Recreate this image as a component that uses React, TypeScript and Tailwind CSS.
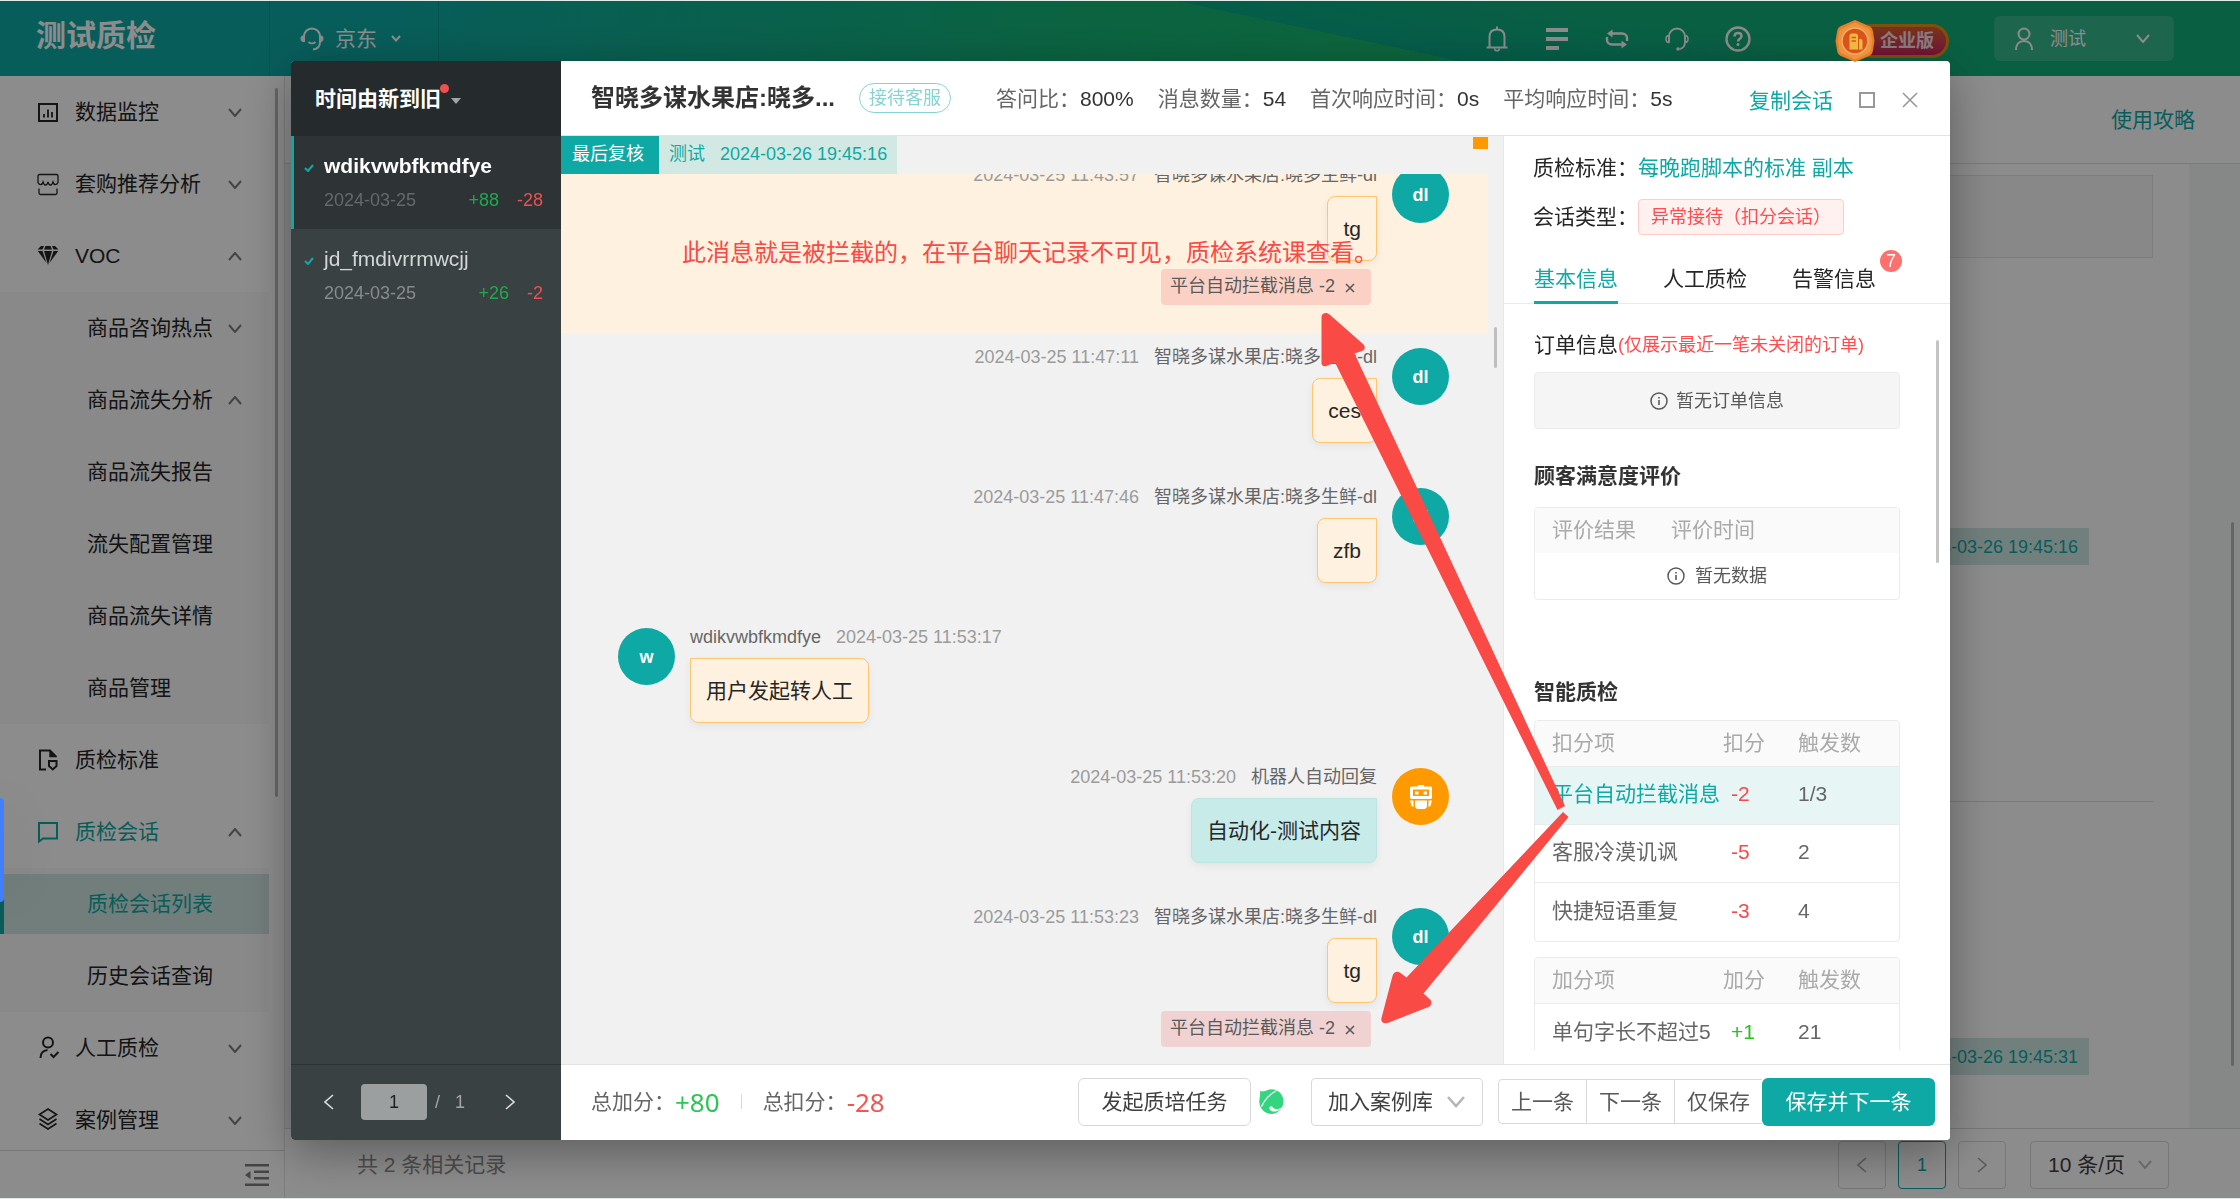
import React from 'react'

const DOWN = 'M1 1l6 7 6-7'
const UP = 'M1 8l6-7 6 7'

function Chevron({ d = DOWN, className = '' }: { d?: string; className?: string }) {
  return (
    <svg viewBox="0 0 14 9" className={`h-[9px] w-[14px] fill-none stroke-current stroke-2 ${className}`}>
      <path d={d} />
    </svg>
  )
}

function Arrow({ right = false, className = '' }: { right?: boolean; className?: string }) {
  return (
    <svg viewBox="0 0 10 16" className={`h-4 w-[10px] fill-none stroke-current ${className}`}>
      <path d={right ? 'M1 1l8 7-8 7' : 'M9 1L1 8l8 7'} strokeWidth="1.6" />
    </svg>
  )
}

function InfoIcon() {
  return (
    <svg viewBox="0 0 18 18" className="h-[18px] w-[18px] fill-none stroke-current">
      <circle cx="9" cy="9" r="8" strokeWidth="1.5" />
      <path d="M9 8v5M9 5v1.6" strokeWidth="1.6" />
    </svg>
  )
}

const icons: Record<string, React.ReactNode> = {
  chart: (
    <>
      <path d="M2 3h18v17H2z" strokeWidth="2" />
      <path d="M7 13v3.500M11 8.500v8M15 11v5.500" strokeWidth="1.800" />
    </>
  ),
  shop: (
    <>
      <path d="M2.500 1.500h17c1 0 1.500.5 1.500 1.500v6.500c-1.500 3-4 3-5-.5-1.200 4-4 4-5 0-1 4-3.800 4-5 0-1 3.500-3.500 3.500-5 .5V3c0-1 .5-1.500 1.500-1.500z" strokeWidth="1.300" />
      <path d="M2 15.500v4.500c0 1 .5 1.500 1.500 1.500h15c1 0 1.500-.5 1.500-1.500v-4.500" strokeWidth="1.300" />
    </>
  ),
  gem: (
    <g className="fill-current" stroke="none">
      <path d="M4 1h3L5.500 4.500H.5zM8.500 1h5l1.500 3.500H7zM15 1h3l3.500 3.500h-5zM.8 6H5.500l4 12zM7 6h8l-4 14zM16.500 6h4.700l-8.700 12z" />
    </g>
  ),
  standard: (
    <>
      <path d="M9 20.500H3V1.500h10l6 6" strokeWidth="2" />
      <path d="M12.500 1v7H20z" className="fill-current" strokeWidth="0.500" />
      <path d="M12 12h7.500v5l-3.700 3.500-3.800-3.500z" strokeWidth="2" />
    </>
  ),
  chat: <path d="M2 2h18v15.500H6L2 20.500z" strokeWidth="2" />,
  check: (
    <>
      <circle cx="11" cy="5.500" r="5" strokeWidth="2" />
      <path d="M3.500 21c0-5 2.500-7.500 7-8M13.500 17l3 3 5-5" strokeWidth="2" />
    </>
  ),
  layers: (
    <path d="M11 0l8.500 5.500L11 11 2.500 5.500zM2.500 10L11 15.500l8.500-5.500M2.500 14.500L11 20l8.500-5.500" strokeWidth="1.700" />
  ),
}

function MenuItem({ icon, label, arrow, active }: { icon: string; label: string; arrow?: string; active?: boolean }) {
  return (
    <a href="#" className={`flex h-[72px] items-center pl-[37px] pr-[27px] ${active ? 'text-[#0ea9a5]' : 'text-[#262626]'}`}>
      <svg viewBox="0 0 22 22" className="mr-4 h-[22px] w-[22px] overflow-visible fill-none stroke-current">{icons[icon]}</svg>
      <span>{label}</span>
      {arrow && <Chevron d={arrow} className="ml-auto text-[#7d7d7d]" />}
    </a>
  )
}

function SubItem({ label, arrow }: { label: string; arrow?: string }) {
  return (
    <a href="#" className="flex h-[72px] items-center pl-[87px] pr-[27px] text-[#262626]">
      <span>{label}</span>
      {arrow && <Chevron d={arrow} className="ml-auto text-[#7d7d7d]" />}
    </a>
  )
}

function Sidebar() {
  return (
    <aside className="relative flex w-[285px] shrink-0 flex-col border-r border-[#e4e4e4] bg-white">
      <nav className="min-h-0 flex-1 overflow-hidden pr-[15px]">
        <MenuItem icon="chart" label="数据监控" arrow={DOWN} />
        <MenuItem icon="shop" label="套购推荐分析" arrow={DOWN} />
        <MenuItem icon="gem" label="VOC" arrow={UP} />
        <div className="bg-[#fafafa]">
          <SubItem label="商品咨询热点" arrow={DOWN} />
          <SubItem label="商品流失分析" arrow={UP} />
          <SubItem label="商品流失报告" />
          <SubItem label="流失配置管理" />
          <SubItem label="商品流失详情" />
          <SubItem label="商品管理" />
        </div>
        <MenuItem icon="standard" label="质检标准" />
        <MenuItem icon="chat" label="质检会话" arrow={UP} active />
        <div className="bg-[#fafafa] pt-[6px]">
          <a href="#" className="mb-[6px] flex h-[60px] items-center border-l-4 border-[#0ea9a5] bg-[#cfe5e1] pl-[83px] text-[#0ea9a5]">
            质检会话列表
          </a>
          <SubItem label="历史会话查询" />
        </div>
        <MenuItem icon="check" label="人工质检" arrow={DOWN} />
        <MenuItem icon="layers" label="案例管理" arrow={DOWN} />
      </nav>
      <div className="absolute right-[6px] top-3 h-[709px] w-[3px] rounded bg-[#b9b9b9]" />
      <div className="flex h-12 shrink-0 items-center justify-end border-t border-[#d9d9d9] pr-[15px]">
        <button aria-label="收起菜单">
          <svg viewBox="0 0 24 22" className="h-[22px] w-6 fill-[#7d7d7d]">
            <path d="M0 0h24v2.500H0zM9 6.500h15V9H9zM9 13h15v2.500H9zM0 19.500h24V22H0zM0 11l5.500-4v8z" />
          </svg>
        </button>
      </div>
    </aside>
  )
}

function TopBar() {
  return (
    <header className="flex h-[75px] shrink-0 items-center bg-[linear-gradient(12deg,transparent_59%,#09a987_59%,#12ae78_74%),linear-gradient(100deg,#0ea9a5_0%,#0ea9a5_16%,#14b577_48%,#17b870_60%)] text-white">
      <h1 className="flex h-full w-[270px] items-center border-r border-black/10 pb-[6px] pl-9 text-[30px] font-bold">测试质检</h1>
      <button className="flex h-full w-[169px] items-center border-r border-black/10 pl-[30px]">
        <svg viewBox="0 0 24 24" className="h-6 w-6 fill-none stroke-current">
          <path d="M4 15V9.500C4 5 7.500 1.500 12 1.500S20 5 20 9.500V15c0 4-2 7-7 7.500" strokeWidth="2" />
          <path d="M4 9H2.500C1.500 9 1 10 1 11.500S1.500 14.500 2.500 14.500H4zM20 9h1.500c1 0 1.500 1 1.500 2.500s-.5 3-1.500 3H20z" className="fill-current" />
          <path d="M8.500 15c2 1.800 5 1.800 7 0" strokeWidth="2" />
        </svg>
        <span className="ml-[11px]">京东</span>
        <svg viewBox="0 0 10 7" className="ml-[14px] h-[7px] w-[10px] fill-none stroke-current stroke-2">
          <path d="M1 1l4 4.500L9 1" />
        </svg>
      </button>
      <div className="ml-auto flex items-center gap-9">
        <button aria-label="通知">
          <svg viewBox="0 0 24 26" className="h-[26px] w-6 fill-none stroke-current">
            <path d="M4.500 21V10.500C4.500 6 7.500 3.500 12 3.500s7.500 2.500 7.500 7V21M1.500 21.500h21M12 0.500v3" strokeWidth="2" />
            <path d="M9.500 22.500c.5 3 4.500 3 5 0" strokeWidth="1.600" />
          </svg>
        </button>
        <button aria-label="列表">
          <svg viewBox="0 0 24 24" className="h-6 w-6 fill-current">
            <path d="M1 1h22v4H1zM1 10h22v4H1zM1 19h13v4H1z" />
          </svg>
        </button>
        <button aria-label="切换">
          <svg viewBox="0 0 24 20" className="h-5 w-6 fill-none stroke-current">
            <path d="M5 4.500h12c3 0 5 2 5 4.500v3M19 15.500H7c-3 0-5-2-5-4.500V8" strokeWidth="2.400" />
            <path d="M2 4.500L7.500.5v8zM22 15.500l-5.500-4v8z" className="fill-current" stroke="none" />
          </svg>
        </button>
        <button aria-label="客服">
          <svg viewBox="0 0 24 24" className="h-6 w-6 fill-none stroke-current">
            <path d="M4 15V9.500C4 5 7.500 1.500 12 1.500S20 5 20 9.500V15c0 4-2 6.500-5.500 7" strokeWidth="1.800" />
            <path d="M4 8.500C2 8.500 1 9.800 1 12s1 3.500 3 3.500zM20 8.500c2 0 3 1.300 3 3.500s-1 3.500-3 3.500z" strokeWidth="1.500" />
            <circle cx="13" cy="22" r="1.700" className="fill-current" stroke="none" />
          </svg>
        </button>
        <button aria-label="帮助">
          <svg viewBox="0 0 26 26" className="h-[26px] w-[26px] fill-none stroke-current">
            <circle cx="13" cy="13" r="11.500" strokeWidth="2.400" />
            <path d="M9.500 10.500c0-2.200 1.500-3.500 3.500-3.500s3.500 1.300 3.500 3.200c0 2.600-3.500 2.600-3.500 5.300" strokeWidth="2.400" />
            <circle cx="13" cy="18.500" r="1.500" className="fill-current" stroke="none" />
          </svg>
        </button>
      </div>
      <div className="ml-[84px] flex items-center pt-1">
        <svg viewBox="0 0 40 44" className="z-10 h-11 w-10 shrink-0">
          <path d="M20 1l14 6c3 1.500 3.500 3 4 6l1.500 9L38 31c-.5 3-1 4.500-4 6l-14 6-14-6c-3-1.500-3.500-3-4-6L.5 22 2 13c.5-3 1-4.500 4-6z" fill="#e87e28" />
          <path d="M20 3.500l12 5.500c2.500 1.200 3.500 2.500 4 5l1 8-1 8c-.5 2.500-1.500 3.800-4 5l-12 5.500L8 35c-2.500-1.200-3.500-2.500-4-5l-1-8 1-8c.5-2.500 1.500-3.800 4-5z" fill="#ee9440" />
          <circle cx="20" cy="22" r="13" fill="#d9541c" />
          <circle cx="20" cy="22" r="13" fill="none" stroke="#f2ae62" strokeWidth="1.500" />
          <path d="M14.500 17c0-1.500 1-2.500 2.500-2.500h3.500c1.500 0 2.500 1 2.500 2.500v13.500h-8.500zM24 20h1.500c1.200 0 2 .8 2 2v8.500H24z" fill="#f0b83c" />
          <path d="M16.500 18.500h4.500M16.500 22h4.500" stroke="#d9541c" strokeWidth="1.600" />
        </svg>
        <span className="-ml-5 flex h-[34px] w-[94px] items-center justify-end rounded-full border-[3px] border-[#e8901a] bg-gradient-to-b from-[#dd5c28] to-[#d01f62] pr-3 text-lg font-bold text-[#fbe3ea]">
          企业版
        </span>
      </div>
      <button className="ml-[45px] mr-[66px] flex h-[45px] w-[180px] items-center rounded-md bg-white/15 pl-5 pr-6">
        <svg viewBox="0 0 20 24" className="h-6 w-5 fill-none stroke-current stroke-2">
          <circle cx="10" cy="7" r="5.500" />
          <path d="M2 23c0-5.500 3-9 8-9s8 3.500 8 9" />
        </svg>
        <span className="ml-4 text-lg">测试</span>
        <Chevron className="ml-auto" />
      </button>
    </header>
  )
}

function RecordRow({ time }: { time: string }) {
  return (
    <div className="flex h-[510px] shrink-0 items-center justify-end border-b border-[#dedede] pr-16">
      <span className="flex h-[37px] items-center bg-[#cfe9e4] px-[11px] text-lg text-[#0ea9a5]">{time}</span>
    </div>
  )
}

function Records() {
  return (
    <main className="flex min-w-0 flex-1 flex-col bg-[#f2f7f5]">
      <div className="flex h-[88px] shrink-0 items-center justify-end border-b border-[#dedede] bg-white pr-[45px]">
        <a href="#" className="text-[#0ea9a5]">使用攻略</a>
      </div>
      <div className="relative min-h-0 flex-1 overflow-hidden px-[51px]">
        <div className="flex h-full flex-col bg-white px-9 pt-[11px]">
          <div className="mb-[34px] h-[83px] shrink-0 border border-[#e4e4e4] bg-[#f7f7f7]" />
          <RecordRow time="2024-03-26 19:45:16" />
          <RecordRow time="2024-03-26 19:45:31" />
        </div>
        <div className="absolute right-[6px] top-[358px] h-[544px] w-[3px] rounded bg-[#b9b9b9]" />
      </div>
      <footer className="flex h-[70px] shrink-0 items-center gap-3 border-t border-[#d9d9d9] bg-white pl-[72px] pr-[71px] pt-[2px]">
        <span className="mr-auto text-[#8c8c8c]">共 2 条相关记录</span>
        <button aria-label="上一页" className="flex h-12 w-12 items-center justify-center rounded border border-[#d9d9d9] text-[#a6a6a6]">
          <Arrow />
        </button>
        <button className="h-12 w-12 rounded border border-[#0ea9a5] text-lg text-[#0ea9a5]">1</button>
        <button aria-label="下一页" className="flex h-12 w-12 items-center justify-center rounded border border-[#d9d9d9] text-[#a6a6a6]">
          <Arrow right />
        </button>
        <label className="relative ml-3 flex items-center">
          <select aria-label="每页条数" className="h-12 w-[139px] appearance-none rounded border border-[#d9d9d9] bg-white pl-[17px] text-[#404040]">
            <option>10 条/页</option>
          </select>
          <Chevron className="pointer-events-none absolute right-[17px] text-[#bfbfbf]" />
        </label>
      </footer>
    </main>
  )
}

function Customer({ name, plus, minus, active }: { name: string; plus: string; minus: string; active?: boolean }) {
  return (
    <a href="#" className={`flex h-[93px] flex-col gap-1 border-l-[3px] pl-[30px] pr-[18px] pt-[14px] ${active ? 'border-[#0ea9a5] bg-[#2e3436]' : 'border-transparent'}`}>
      <div className={`flex h-8 items-center ${active ? 'font-bold text-white' : 'text-[#d5d7d7]'}`}>
        <svg viewBox="0 0 10 8" className="-ml-5 mr-[10px] mt-1 h-2 w-[10px] fill-none stroke-[#0ea9a5] stroke-2">
          <path d="M1 4l3 3 5-6" />
        </svg>
        {name}
      </div>
      <div className="flex h-7 items-center gap-[18px] text-lg">
        <span className={`mr-auto ${active ? 'text-[#65696a]' : 'text-[#888c8d]'}`}>2024-03-25</span>
        <span className="text-[#1fa94c]">{plus}</span>
        <span className="text-[#f04f50]">{minus}</span>
      </div>
    </a>
  )
}

function CustomerList() {
  return (
    <aside className="flex w-[270px] shrink-0 flex-col bg-[#3a4142]">
      <button className="flex h-[75px] shrink-0 items-center bg-[#252a2c] pl-6 font-bold text-white">
        时间由新到旧
        <span className="-ml-px mb-[20px] h-[9px] w-[9px] rounded-full bg-[#f04f50]" />
        <svg viewBox="0 0 10 6" className="ml-[2px] mt-1 h-[6px] w-[10px] fill-[#a3a6a7]">
          <path d="M0 0h10L5 6z" />
        </svg>
      </button>
      <Customer name="wdikvwbfkmdfye" plus="+88" minus="-28" active />
      <Customer name="jd_fmdivrrmwcjj" plus="+26" minus="-2" />
      <div className="mt-auto flex h-[76px] items-center border-t border-[#2c3233] pb-px pl-[33px] text-lg text-[#a3a6a7]">
        <button aria-label="上一页" className="text-[#dcdddd]"><Arrow /></button>
        <input aria-label="页码" defaultValue="1" className="ml-[27px] h-9 w-[66px] rounded bg-[#9b9fa0] text-center text-[#1f1f1f]" />
        <span className="ml-2">/</span>
        <span className="ml-[15px]">1</span>
        <button aria-label="下一页" className="ml-10 text-[#dcdddd]"><Arrow right /></button>
      </div>
    </aside>
  )
}

function Stat({ label, value }: { label: string; value: string }) {
  return <span className="text-[#666]">{label}：<span className="text-[#333]">{value}</span></span>
}

type MessageProps = { name: string; time: string; text: string; tag?: boolean; mine?: boolean; robot?: boolean; marked?: boolean }

function RobotIcon() {
  return (
    <svg viewBox="0 0 24 24" className="h-6 w-6 fill-white">
      <path fillRule="evenodd" d="M9 0h6v1.500h6.500c.8 0 1.500.6 1.500 1.500v9.500c0 .8-.7 1.500-1.500 1.500h-19c-.8 0-1.500-.7-1.500-1.500V3c0-.9.7-1.500 1.500-1.500H9zM4 4.500v6.500h16V4.500z" />
      <path d="M6 6.500h3.500v3H6zM14.500 6.500H18v3h-3.500zM6 15.500h12v5c0 2-1 3.500-3 3.500H9c-2 0-3-1.500-3-3.500zM1 15.500h3.500v6.500L2.500 21zM19.500 15.500H23L21.500 21l-2 1z" />
    </svg>
  )
}

function Message({ name, time, text, tag, mine, robot, marked }: MessageProps) {
  const bubble = robot ? 'border-[#bbe5e3] bg-[#c6ebe9]' : 'border-[#fdc671] bg-[#fff1df]'
  return (
    <div className={`flex gap-[15px] pl-[57px] pr-[39px] pt-3 ${mine ? 'flex-row-reverse' : ''} ${tag ? 'pb-7' : 'pb-[30px]'} ${marked ? 'bg-[#fff1df]' : ''}`}>
      <div className={`mt-[3px] flex h-[57px] w-[57px] shrink-0 items-center justify-center rounded-full text-lg font-bold text-white ${robot ? 'bg-[#f90]' : 'bg-[#0ea9a5]'}`}>
        {robot ? <RobotIcon /> : mine ? 'dl' : 'w'}
      </div>
      <div className={`flex flex-col ${mine ? 'items-end' : 'items-start'}`}>
        <div className={`flex gap-[15px] text-lg leading-6 ${mine ? '' : 'flex-row-reverse'}`}>
          <span className="text-[#9b9b9b]">{time}</span>
          <span className="text-[#666]">{name}</span>
        </div>
        <div className={`mt-[9px] flex h-[65px] items-center rounded-lg border px-[15px] text-[#262626] shadow-[0_3px_8px_rgba(0,0,0,0.06)] ${mine ? 'rounded-tr-none' : 'rounded-tl-none'} ${bubble}`}>
          {text}
        </div>
        {tag && (
          <div className={`mr-[6px] mt-2 flex h-9 items-center rounded pb-[2px] pl-[9px] pr-4 text-lg text-[#595959] ${marked ? 'bg-[#fcd1c5]' : 'bg-[#f0d2d2]'}`}>
            平台自动拦截消息 -2
            <button aria-label="移除" className="ml-[10px]">
              <svg viewBox="0 0 10 10" className="mt-1 h-[10px] w-[10px] fill-none stroke-current">
                <path d="M1 1l8 8M9 1L1 9" strokeWidth="1.600" />
              </svg>
            </button>
          </div>
        )}
      </div>
    </div>
  )
}

function Chat() {
  const shop = '智晓多谋水果店:晓多生鲜-dl'
  return (
    <section className="relative flex min-w-0 flex-1 flex-col bg-[#f1f1f1]">
      <div className="flex h-[38px] shrink-0 text-lg">
        <span className="flex w-[98px] items-center bg-[#0ea9a5] pb-[3px] pl-[11px] text-white">最后复核</span>
        <span className="flex items-center gap-[15px] bg-[#d2e9e3] px-[10px] pb-[3px] text-[#0ea9a5]">
          <span>测试</span>
          <span>2024-03-26 19:45:16</span>
        </span>
        <span className="ml-auto mr-[15px] mt-px h-3 w-[15px] bg-[#f90]" />
      </div>
      <div className="min-h-0 flex-1 overflow-hidden pr-[15px]">
        <div className="-mt-[23px]">
          <Message mine marked tag name={shop} time="2024-03-25 11:43:57" text="tg" />
          <Message mine name={shop} time="2024-03-25 11:47:11" text="ces" />
          <Message mine name={shop} time="2024-03-25 11:47:46" text="zfb" />
          <Message name="wdikvwbfkmdfye" time="2024-03-25 11:53:17" text="用户发起转人工" />
          <Message mine robot name="机器人自动回复" time="2024-03-25 11:53:20" text="自动化-测试内容" />
          <Message mine tag name={shop} time="2024-03-25 11:53:23" text="tg" />
        </div>
      </div>
      <div className="absolute right-[6px] top-[191px] h-[41px] w-[3px] rounded bg-[#bfbfbf]" />
    </section>
  )
}

type Row = { name: string; score: string; count: string; active?: boolean }

function ScoreTable({ head, rows }: { head: string[]; rows: Row[] }) {
  return (
    <div className="overflow-hidden rounded border border-[#ebebeb]">
      <table className="w-full table-fixed border-separate border-spacing-0 text-left text-[#666]">
        <thead>
          <tr className="h-[46px] bg-[#fafafa] text-[#aaa]">
            <th className="w-[188px] border-b border-[#ebebeb] p-0 pb-[2px] pl-[17px] font-normal">{head[0]}</th>
            <th className="w-[75px] border-b border-[#ebebeb] p-0 pb-[2px] font-normal">{head[1]}</th>
            <th className="border-b border-[#ebebeb] p-0 pb-[2px] font-normal">{head[2]}</th>
          </tr>
        </thead>
        <tbody className="[&>tr:not(:last-child)>td]:border-b [&>tr>td]:border-[#ebebeb]">
          {rows.map((row) => (
            <tr key={row.name} className={`h-[58px] ${row.active ? 'bg-[#e7f5f5]' : ''}`}>
              <td className={`whitespace-nowrap p-0 pb-[3px] pl-[17px] ${row.active ? 'text-[#0ea9a5]' : ''}`}>{row.name}</td>
              <td className={`p-0 pb-[3px] pl-2 ${row.score[0] === '+' ? 'text-[#27c221]' : 'text-[#f5494c]'}`}>{row.score}</td>
              <td className="p-0 pb-[3px]">{row.count}</td>
            </tr>
          ))}
        </tbody>
      </table>
    </div>
  )
}

function Detail() {
  return (
    <section className="flex w-[447px] shrink-0 flex-col border-l border-[#e8e8e8] bg-white pb-[14px] text-[#262626]">
      <p className="flex h-8 shrink-0 items-center pl-[29px] mt-4">
        质检标准：<a href="#" className="text-[#0ea9a5]">每晚跑脚本的标准 副本</a>
      </p>
      <p className="mt-[15px] flex h-9 shrink-0 items-center pl-[29px]">
        会话类型：
        <span className="flex h-9 items-center rounded border border-[#ffccc7] bg-[#fff1f0] px-[12px] text-lg text-[#ff4d4f]">异常接待（扣分会话）</span>
      </p>
      <nav className="mt-[18px] flex h-[51px] shrink-0 gap-[45px] border-b border-[#ebebeb] pl-[30px]">
        <button className="-mb-px border-b-[3px] border-[#0ea9a5] pt-[3px] text-[#0ea9a5]">基本信息</button>
        <button className="pt-px">人工质检</button>
        <button className="relative pt-px">
          告警信息
          <span className="absolute -right-[26px] -top-[3px] flex h-[22px] w-[22px] items-center justify-center rounded-full bg-[#ff706e] text-lg text-white">7</span>
        </button>
      </nav>
      <div className="relative min-h-0 flex-1 overflow-hidden pl-[30px] pr-[50px] pt-[25px]">
        <p className="flex h-8 items-center">
          订单信息<span className="text-lg text-[#ff4d4f]">(仅展示最近一笔未关闭的订单)</span>
        </p>
        <div className="mt-[11px] flex h-[57px] items-center justify-center gap-2 rounded border border-[#ebebeb] bg-[#f5f5f5] text-lg text-[#595959]">
          <InfoIcon />
          暂无订单信息
        </div>
        <h3 className="mt-[31px] h-8 font-bold leading-8 text-[#333]">顾客满意度评价</h3>
        <div className="mt-[15px] overflow-hidden rounded border border-[#ebebeb]">
          <table className="w-full table-fixed border-separate border-spacing-0 text-left">
            <thead>
              <tr className="h-[45px] bg-[#fafafa] text-[#aaa]">
                <th className="w-[119px] p-0 pb-[2px] pl-[17px] font-normal">评价结果</th>
                <th className="p-0 pb-[2px] pl-[17px] font-normal">评价时间</th>
              </tr>
            </thead>
            <tbody>
              <tr className="h-[46px]">
                <td colSpan={2} className="p-0 text-lg text-[#595959]">
                  <span className="flex items-center justify-center gap-[10px]">
                    <InfoIcon />
                    暂无数据
                  </span>
                </td>
              </tr>
            </tbody>
          </table>
        </div>
        <h3 className="mb-3 mt-[76px] h-8 font-bold leading-8 text-[#333]">智能质检</h3>
        <div className="flex flex-col gap-[15px]">
          <ScoreTable
            head={['扣分项', '扣分', '触发数']}
            rows={[
              { name: '平台自动拦截消息', score: '-2', count: '1/3', active: true },
              { name: '客服冷漠讥讽', score: '-5', count: '2' },
              { name: '快捷短语重复', score: '-3', count: '4' },
            ]}
          />
          <ScoreTable
            head={['加分项', '加分', '触发数']}
            rows={[
              { name: '单句字长不超过5', score: '+1', count: '21' },
            ]}
          />
        </div>
        <div className="absolute right-[11px] top-9 h-[223px] w-[3px] rounded bg-[#c4c4c4]" />
      </div>
    </section>
  )
}

function ActionBar() {
  return (
    <footer className="flex h-[76px] shrink-0 items-center border-t border-[#e3e3e3] bg-white pb-[2px] pl-[30px] pr-[15px] text-[#404040]">
      <span className="text-[#666]">总加分：</span>
      <span className="font-['Noto_Sans'] text-[26px] text-[#2cc455]">+80</span>
      <span className="mx-[21px] h-[15px] w-px bg-[#d9d9d9]" />
      <span className="text-[#666]">总扣分：</span>
      <span className="font-['Noto_Sans'] text-[26px] text-[#f5544f]">-28</span>
      <button className="ml-auto h-12 w-[173px] rounded-md border border-[#d9d9d9]">发起质培任务</button>
      <svg viewBox="0 0 25 25" className="ml-2 h-[25px] w-[25px]">
        <path d="M1 2c3 .8 5 .3 7-.8 7-3 16 1.500 16.500 10.500C25 19 19 25 12.500 25S0 19.500 .3 12C.4 9 1.500 7 1 2z" fill="#33d67f" />
        <path d="M17.500 1.500C11 5 6 10 2.500 17.500" stroke="#fff" strokeWidth="1.300" fill="none" />
        <path d="M25 16.500c-3 3.500-7.500 4.500-9.500 3.300-1.600-1-1.800-2.600-3-2.600-1.800 0-2.700 1.600-1.700 3.300 2.300 3.600 10.200 2.500 14.200-4z" fill="#fff" />
      </svg>
      <label className="relative ml-[27px] mr-[15px] flex items-center">
        <select aria-label="加入案例库" className="h-12 w-[172px] appearance-none rounded border border-[#d9d9d9] bg-white pl-4">
          <option>加入案例库</option>
        </select>
        <svg viewBox="0 0 18 12" className="pointer-events-none absolute right-[18px] h-3 w-[18px] fill-none stroke-[#b5b5b5] stroke-[2.5]">
          <path d="M1 1l8 9 8-9" />
        </svg>
      </label>
      <div className="flex text-[#595959]">
        <button className="h-[45px] w-[89px] rounded-l border border-[#d9d9d9]">上一条</button>
        <button className="h-[45px] w-[88px] border-y border-r border-[#d9d9d9]">下一条</button>
        <button className="h-[45px] w-[87px] border-y border-[#d9d9d9]">仅保存</button>
      </div>
      <button className="h-12 w-[173px] rounded-md bg-[#0ea9a5] text-white">保存并下一条</button>
    </footer>
  )
}

function Annotation() {
  return (
    <>
      <p className="pointer-events-none absolute right-[572px] top-[176px] whitespace-nowrap text-2xl leading-8 text-[#f94a46]">
        此消息就是被拦截的，在平台聊天记录不可见，质检系统课查看。
      </p>
      <svg viewBox="1318 310 252 716" className="pointer-events-none absolute right-[380px] top-[249px] h-[716px] w-[252px] fill-[#f94a46]">
        <path d="M1321.500 317c0-4 5-5.500 8-2.500l33.500 29.500c3 3 2 6-1 7l-7.500 2.500L1565 806l-7.500 4L1335 362.500l-8.500 3.500c-3 1-5-.5-5-3z" />
        <path d="M1381.500 1018l11-42c1-4 5-5.500 8-3l6 4.500L1563 812l5.500 5-145 176.500 6.500 6c2.500 2.500 1.500 6-1.500 7.500l-41 16c-4 1-7-1-6-5z" />
      </svg>
    </>
  )
}

function SessionDialog() {
  return (
    <div role="dialog" className="relative flex min-w-0 flex-1 overflow-hidden rounded bg-white shadow-[0_12px_48px_rgba(0,0,0,0.35)]">
      <CustomerList />
      <div className="flex min-w-0 flex-1 flex-col">
        <header className="flex h-[75px] shrink-0 items-center border-b border-[#e3e3e3] pl-[30px] pr-8">
          <h2 className="whitespace-nowrap text-2xl font-bold text-[#333]">智晓多谋水果店:晓多...</h2>
          <span className="ml-6 flex h-[30px] items-center rounded-full border border-[#86d4d2] px-[9px] text-lg text-[#86d4d2]">接待客服</span>
          <div className="ml-[45px] flex gap-6 whitespace-nowrap pt-px">
            <Stat label="答问比" value="800%" />
            <Stat label="消息数量" value="54" />
            <Stat label="首次响应时间" value="0s" />
            <Stat label="平均响应时间" value="5s" />
          </div>
          <a href="#" className="ml-auto pt-[6px] text-[#0ea9a5]">复制会话</a>
          <button aria-label="最大化" className="ml-[26px] mt-1 h-4 w-4 border-2 border-[#999]" />
          <button aria-label="关闭" className="ml-[27px] mt-[3px] text-[#999]">
            <svg viewBox="0 0 16 16" className="h-4 w-4 fill-none stroke-current">
              <path d="M1 1l14 14M15 1L1 15" strokeWidth="1.600" />
            </svg>
          </button>
        </header>
        <div className="flex min-h-0 flex-1">
          <Chat />
          <Detail />
        </div>
        <ActionBar />
      </div>
      <Annotation />
    </div>
  )
}

export default function App() {
  return (
    <div className="flex h-screen flex-col overflow-hidden border-y border-[#e2ece9] font-['Liberation_Sans','Noto_Sans_CJK_SC',sans-serif] text-[21px] leading-8">
      <TopBar />
      <div className="flex min-h-0 flex-1">
        <Sidebar />
        <Records />
      </div>
      <div className="fixed inset-x-0 bottom-px top-px flex bg-black/45 pb-[58px] pl-[291px] pr-[290px] pt-[60px]">
        <SessionDialog />
      </div>
      <div className="fixed left-0 top-[798px] h-[104px] w-1 rounded-r bg-[#4080ff] shadow-[0_0_60px_rgba(0,0,0,0.45)]" />
    </div>
  )
}
